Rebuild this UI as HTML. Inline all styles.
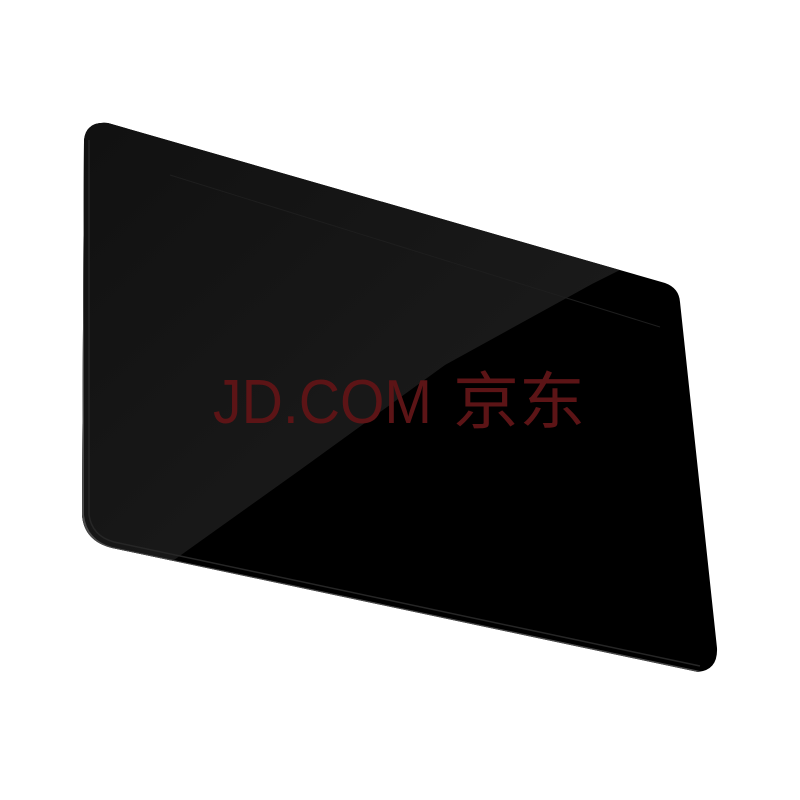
<!DOCTYPE html>
<html><head><meta charset="utf-8"><style>
html,body{margin:0;padding:0;background:#fff;width:800px;height:800px;overflow:hidden}
</style></head><body>
<svg width="800" height="800" viewBox="0 0 800 800" xmlns="http://www.w3.org/2000/svg">
<defs>
<clipPath id="c"><path d="M108 123 L665 283 Q679 288 680 302 L717 648 Q718 670 698 672 L112 548 Q84 541 82 515 L84 140 Q86 121 108 123 Z"/></clipPath>
<linearGradient id="g" x1="0" y1="0" x2="1" y2="1">
<stop offset="0" stop-color="#101010"/><stop offset="0.7" stop-color="#1a1a1a"/><stop offset="1" stop-color="#262626"/>
</linearGradient>
</defs>
<path d="M108 123 L665 283 Q679 288 680 302 L717 648 Q718 670 698 672 L112 548 Q84 541 82 515 L84 140 Q86 121 108 123 Z" fill="#000"/>
<g clip-path="url(#c)">
<polygon points="60,100 620,270 592,284 445,365 300,470 160,570 60,600" fill="url(#g)"/>
<path d="M83 140 L83 515 Q86 541 112 548 L700 672" fill="none" stroke="#4a4a4a" stroke-width="2"/>
<path d="M89 140 L89 515 Q92 536 114 542 L700 666" fill="none" stroke="#262626" stroke-width="1.5"/>
<line x1="170" y1="175" x2="660" y2="327" stroke="#1e1e1e" stroke-width="1"/>
</g>
<text x="213" y="423" font-family="Liberation Sans, sans-serif" font-size="62" fill="#5c1416" textLength="219" lengthAdjust="spacingAndGlyphs">JD.COM</text>
<text x="453" y="423" font-family="Liberation Sans, 'Noto Sans CJK SC', sans-serif" font-size="62" fill="#5c1416" textLength="132" lengthAdjust="spacingAndGlyphs">京东</text>
</svg>
</body></html>
